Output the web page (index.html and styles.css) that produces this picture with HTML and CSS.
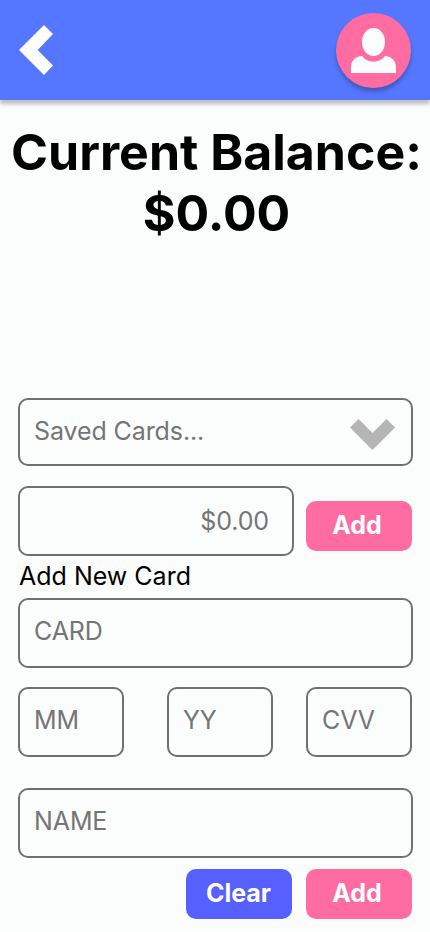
FILE: index.html
```html
<!DOCTYPE html>
<html lang="en">
<head>
<meta charset="utf-8">
<meta name="viewport" content="width=device-width, initial-scale=1">
<title>Current Balance</title>
<link rel="stylesheet" href="styles.css">
</head>
<body>
<header class="topbar">
  <a class="back" href="#" aria-label="Back">
    <svg width="34" height="50" viewBox="0 0 34 50"><path d="M25 0L34 9L18.7 25L34 40.6L25 50L0 25Z" fill="#fff"/></svg>
  </a>
  <a class="avatar" href="#" aria-label="Profile">
    <svg width="75" height="75" viewBox="0 0 75 75" fill="#fbfdfd"><ellipse cx="37.5" cy="29" rx="11.5" ry="14"/><path d="M15 60V54C15 48 19.5 43 26 43C31.5 50.5 43.5 50.5 49 43C55.5 43 60 48 60 54V60Z"/></svg>
  </a>
</header>
<main>
  <h1 class="balance">Current Balance:<br>$0.00</h1>
  <form class="form">
    <div class="field select">
      <span>Saved Cards...</span>
      <svg class="chevron" width="45" height="31" viewBox="0 0 45 31"><path d="M8.5 0L22.5 14L36.5 0L45 8.5L22.5 31L0 8.5Z" fill="#b5b5b5"/></svg>
    </div>
    <div class="row amount-row">
      <div class="field amount">$0.00</div>
      <button class="btn pink" type="button">Add</button>
    </div>
    <div class="label">Add New Card</div>
    <div class="field">CARD</div>
    <div class="row details">
      <div class="field small">MM</div>
      <div class="field small year">YY</div>
      <div class="field small cvv">CVV</div>
    </div>
    <div class="field">NAME</div>
    <div class="row actions">
      <button class="btn blue" type="button">Clear</button>
      <button class="btn pink" type="button">Add</button>
    </div>
  </form>
</main>
</body>
</html>
```
FILE: styles.css
```css
* { box-sizing: border-box; }

body {
  margin: 0;
  height: 932px;
  overflow: hidden;
  background: #fbfdfd;
  color: #000;
  font-family: Inter, sans-serif;
  font-size: 25px;
  line-height: 30px;
}

svg { display: block; }

.topbar {
  display: flex;
  justify-content: space-between;
  align-items: center;
  height: 100px;
  padding: 0 19px;
  background: #5577ff;
  box-shadow: 0 4px 4px rgba(0, 0, 0, .25);
}

.avatar {
  border-radius: 50%;
  background: #ff6ca2;
  box-shadow: 0 4px 4px rgba(0, 0, 0, .25);
}

.balance {
  height: 276px;
  margin: 22px 0 0;
  padding-left: 3px;
  font-size: 50px;
  font-weight: 700;
  line-height: 61px;
  text-align: center;
  white-space: nowrap;
}

.form { padding: 0 17px 0 18px; }

.row { display: flex; }

.field {
  height: 70px;
  padding: 16px 14px;
  border: 2px solid #707070;
  border-radius: 10px;
  color: #757575;
  letter-spacing: -.1px;
}

.select {
  display: flex;
  justify-content: space-between;
  height: 68px;
  padding: 16px 16px 0 14px;
}

.chevron { margin-top: 3px; }

.amount-row {
  gap: 12px;
  align-items: flex-start;
  margin-top: 20px;
}

.amount-row .btn { margin-top: 15px; }

.amount {
  width: 276px;
  padding: 18px 23px;
  text-align: right;
}

.label {
  height: 42px;
  padding: 5px 1px 0;
}

.details { margin: 19px 0 31px; }

.small { width: 106px; }
.year { margin-left: 43px; }
.cvv { margin-left: 33px; }

.actions {
  justify-content: flex-end;
  gap: 14px;
  margin-top: 11px;
  padding-right: 1px;
}

.btn {
  width: 106px;
  height: 50px;
  padding: 0 4px 2px 0;
  border: 0;
  border-radius: 10px;
  color: #fff;
  font: 700 25px/30px Inter, sans-serif;
}

.pink { background: #ff6ca2; }
.blue { padding-right: 1px; background: #5660ff; }
```
